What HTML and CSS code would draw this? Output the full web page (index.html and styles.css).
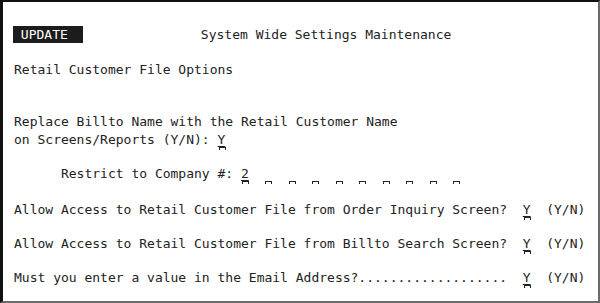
FILE: index.html
```html
<!DOCTYPE html>
<html lang="en">
<head>
    <meta charset="UTF-8">
    <meta name="viewport" content="width=device-width, initial-scale=1.0">
    <title>System Wide Settings Maintenance</title>
    <link rel="stylesheet" href="styles.css">
</head>
<body>
    <div class="screen">
        <div class="line head"><span class="badge"> UPDATE  </span>               <span class="title">System Wide Settings Maintenance</span></div>
        <div class="line section">Retail Customer File Options</div>
        <div class="line question">Replace Billto Name with the Retail Customer Name</div>
        <div class="line cont">on Screens/Reports (Y/N): <span class="fld val">Y</span></div>
        <div class="line company">      Restrict to Company #: <span class="fld val">2</span>  <span class="fld"> </span>  <span class="fld"> </span>  <span class="fld"> </span>  <span class="fld"> </span>  <span class="fld"> </span>  <span class="fld"> </span>  <span class="fld"> </span>  <span class="fld"> </span>  <span class="fld"> </span></div>
        <div class="line opt">Allow Access to Retail Customer File from Order Inquiry Screen?  <span class="fld val">Y</span>  (Y/N)</div>
        <div class="line opt">Allow Access to Retail Customer File from Billto Search Screen?  <span class="fld val">Y</span>  (Y/N)</div>
        <div class="line opt">Must you enter a value in the Email Address?...................  <span class="fld val">Y</span>  (Y/N)</div>
    </div>
</body>
</html>
```

FILE: styles.css
```css
body {
    margin: 0;
    background: #fff;
}
.screen {
    width: 600px;
    height: 303px;
    box-sizing: border-box;
    border-top: 2px solid #111;
    border-left: 3px solid #111;
    border-right: 2px solid #6a6a6a;
    border-bottom: 2px solid #6a6a6a;
    padding: 24px 0 0 11px;
    display: flex;
    flex-direction: column;
    font-family: "DejaVu Sans Mono", "Liberation Mono", monospace;
    font-size: 13px;
    color: #222;
    overflow: hidden;
}
.line {
    white-space: pre;
    line-height: 17px;
    height: 17px;
}
.badge {
    display: inline-block;
    background: #1c1c1c;
    color: #fff;
    margin-left: -1px;
}
.section {
    margin-top: 18px;
}
.question {
    margin-top: 35px;
}
.cont {
    margin-top: 1px;
}
.company {
    margin-top: 17px;
}
.opt {
    margin-top: 17px;
}
.company + .opt {
    margin-top: 19px;
}
.fld {
    position: relative;
    display: inline-block;
}
.fld::after {
    content: '';
    position: absolute;
    left: 1px;
    bottom: -2px;
    width: 5px;
    height: 2px;
    border: 1px solid #222;
    border-bottom: none;
}
.val {
    text-decoration: underline;
    text-underline-offset: 2px;
}
```
